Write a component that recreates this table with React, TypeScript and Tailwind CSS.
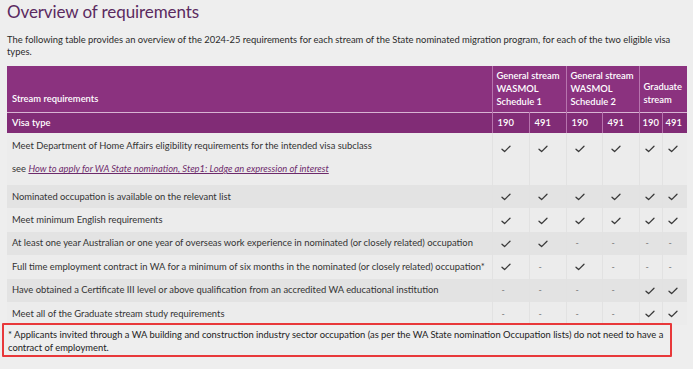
import React from "react";

type Mark = "y" | "-";

const rows: { text: React.ReactNode; marks: Mark[]; tall?: boolean }[] = [
  {
    text: (
      <div className="flex flex-col gap-[9px]">
        <span>Meet Department of Home Affairs eligibility requirements for the intended visa subclass</span>
        <span>
          see{" "}
          <a className="italic underline text-[#6d2a6b]" href="#">
            How to apply for WA State nomination, Step1: Lodge an expression of interest
          </a>
        </span>
      </div>
    ),
    marks: ["y", "y", "y", "y", "y", "y"],
    tall: true,
  },
  { text: "Nominated occupation is available on the relevant list", marks: ["y", "y", "y", "y", "y", "y"] },
  { text: "Meet minimum English requirements", marks: ["y", "y", "y", "y", "y", "y"] },
  {
    text: "At least one year Australian or one year of overseas work experience in nominated (or closely related) occupation",
    marks: ["y", "y", "-", "-", "-", "-"],
  },
  {
    text: "Full time employment contract in WA for a minimum of six months in the nominated (or closely related) occupation*",
    marks: ["y", "-", "y", "-", "-", "-"],
  },
  {
    text: "Have obtained a Certificate III level or above qualification from an accredited WA educational institution",
    marks: ["-", "-", "-", "-", "y", "y"],
  },
  { text: "Meet all of the Graduate stream study requirements", marks: ["-", "-", "-", "-", "y", "y"] },
];

const Check = () => (
  <svg width="10" height="8" viewBox="0 0 10 8" className="inline-block">
    <path d="M1 4.2 L3.6 6.6 L9 1.2" fill="none" stroke="#3a3a3a" strokeWidth="1.3" strokeLinecap="round" strokeLinejoin="round" />
  </svg>
);

export default function App() {
  return (
    <div
      className="w-[693px] h-[369px] overflow-hidden bg-[#eeeeee] text-[#333] text-[9.4px]"
      style={{ fontFamily: "Lato, 'Open Sans', sans-serif" }}
    >
      <h1 className="pl-[7px] pt-[1px] text-[17px] leading-[22px] text-[#5b2a60] font-normal tracking-[-0.1px]">
        Overview of requirements
      </h1>
      <p className="mt-[11px] px-[7px] leading-[12px] text-[#2b2b2b]">
        The following table provides an overview of the 2024-25 requirements for each stream of the State nominated migration program, for each of the two eligible visa types.
      </p>
      <div className="mt-[8px] pl-[7px]">
        <table className="table-fixed border-collapse w-[680px]">
          <colgroup>
            <col className="w-[485px]" />
            <col className="w-[37px]" />
            <col className="w-[37px]" />
            <col className="w-[36px]" />
            <col className="w-[37px]" />
            <col className="w-[23px]" />
            <col className="w-[25px]" />
          </colgroup>
          <thead className="text-white font-semibold text-[9.4px]">
            <tr className="bg-[#8b327f] h-[46px] border-b border-[#d8b4d3]">
              <th className="text-left align-bottom px-[5px] pb-[5px] font-semibold">Stream requirements</th>
              <th colSpan={2} className="text-left align-middle px-[4px] leading-[13px] font-semibold border-l border-[#b774ae]">
                General stream WASMOL Schedule 1
              </th>
              <th colSpan={2} className="text-left align-middle px-[4px] leading-[13px] font-semibold border-l border-[#b774ae]">
                General stream WASMOL Schedule 2
              </th>
              <th colSpan={2} className="text-left align-middle pl-[4px] pr-0 pt-[9px] leading-[13px] font-semibold border-l border-[#b774ae]">
                Graduate stream
              </th>
            </tr>
            <tr className="bg-[#812c76] h-[21px]">
              <th className="text-left px-[5px] font-semibold">Visa type</th>
              {["190", "491", "190", "491", "190", "491"].map((v, i) => (
                <th key={i} className={`text-left font-semibold border-l border-[#b774ae] ${i >= 4 ? "px-[3px]" : "px-[5px]"}`}>
                  {v}
                </th>
              ))}
            </tr>
          </thead>
          <tbody>
            {rows.map((r, i) => (
              <tr key={i} className={`${i % 2 === 1 ? "bg-[#e3e3e3]" : "bg-[#ececec]"} ${r.tall ? "h-[52px]" : "h-[23.4px]"}`}>
                <td className={`px-[5px] ${r.tall ? "align-top pt-[6px] pb-[8px]" : "align-middle"}`}>{r.text}</td>
                {r.marks.map((m, j) => (
                  <td
                    key={j}
                    className={`border-l border-[#e2e2e2] ${r.tall ? "align-top pt-[8px]" : "align-middle"} ${j >= 4 ? "pl-[5px]" : "pl-[8px]"}`}
                  >
                    {m === "y" ? <Check /> : <span className="text-[#777] text-[9px] pl-[1px]">-</span>}
                  </td>
                ))}
              </tr>
            ))}
          </tbody>
        </table>
      </div>
      <div className="relative -mt-[2px] ml-[2px] w-[670px] h-[34px] border-2 border-[#e8383a] rounded-[1px] pl-[4px] pt-[3px] leading-[13px] text-[#222]">
        * Applicants invited through a WA building and construction industry sector occupation (as per the WA State nomination Occupation lists) do not need to have a contract of employment.
      </div>
    </div>
  );
}
